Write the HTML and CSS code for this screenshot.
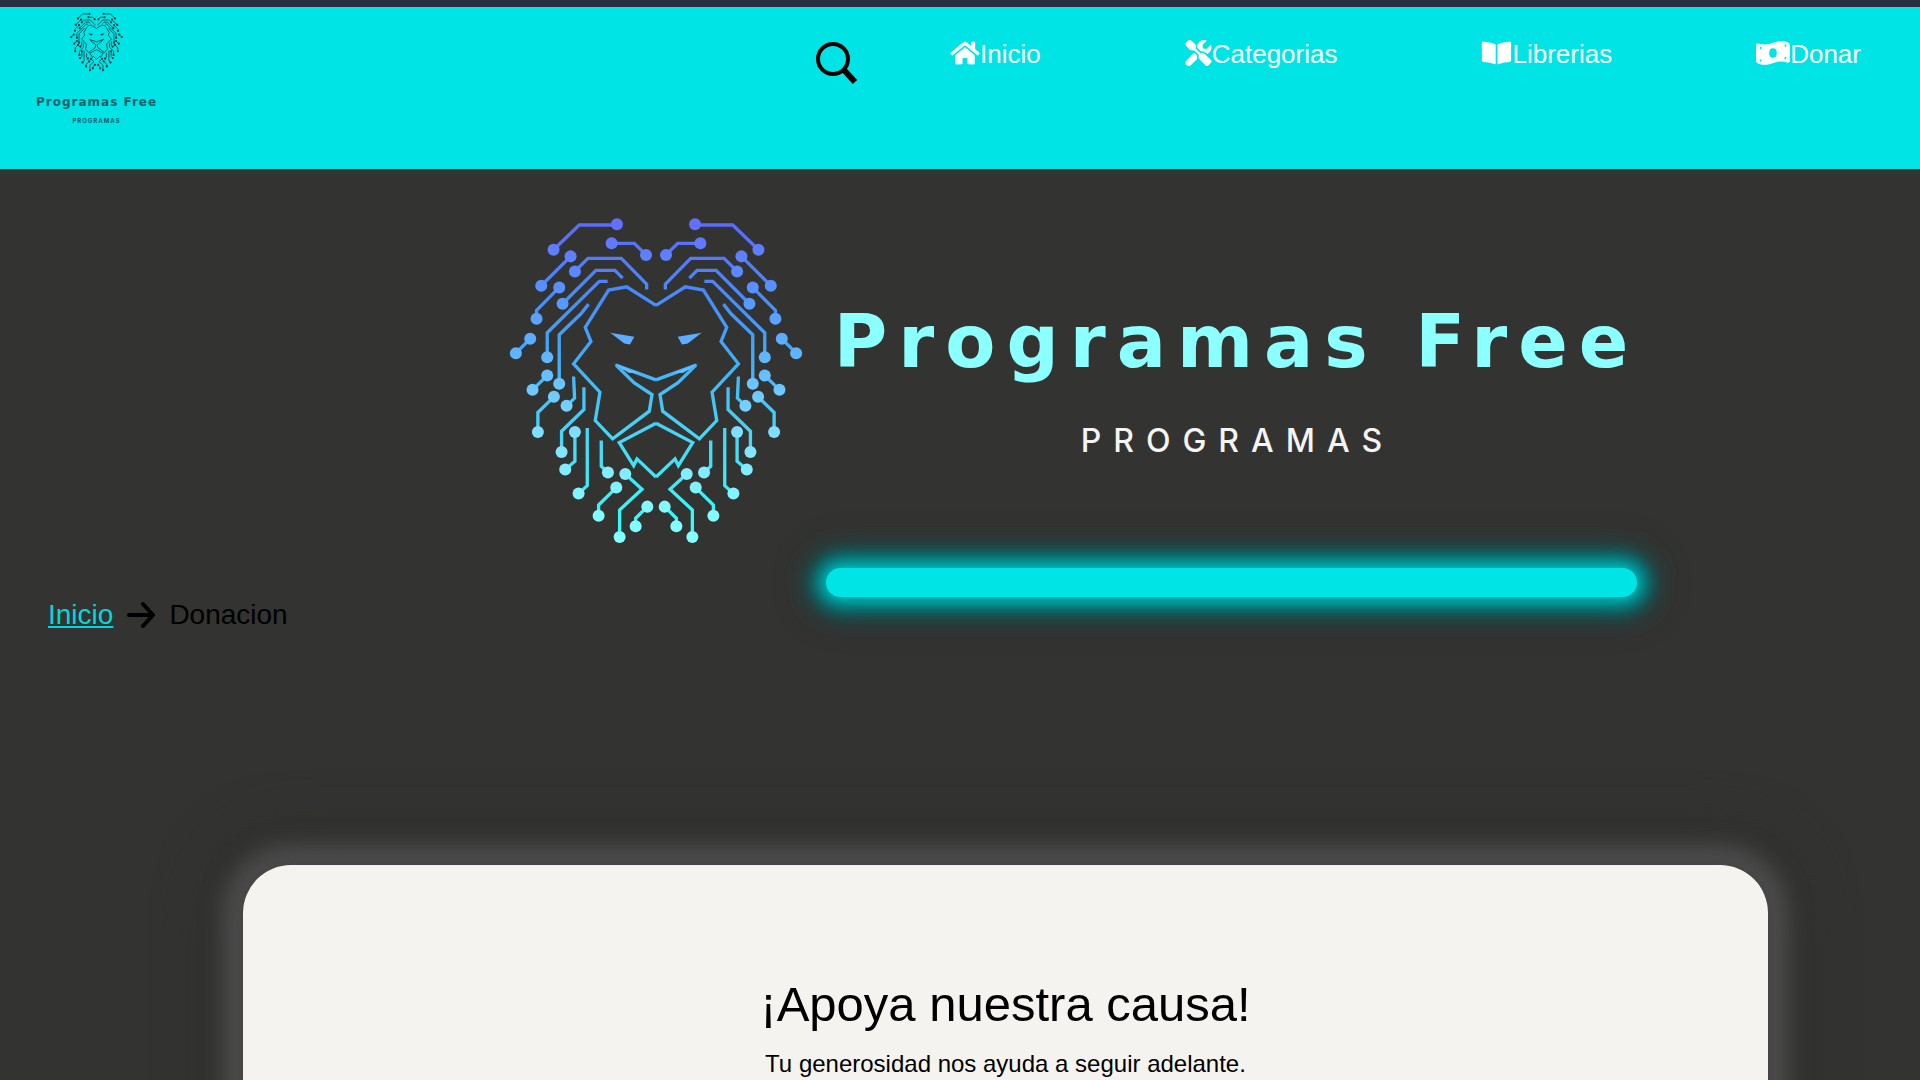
FILE: index.html
```html
<!DOCTYPE html>
<html lang="es">
<head>
<meta charset="utf-8">
<meta name="viewport" content="width=device-width, initial-scale=1">
<title>Programas Free - Donacion</title>
<link rel="stylesheet" href="styles.css">
</head>
<body>
<svg class="defs" aria-hidden="true">
  <defs>
    <linearGradient id="mane" gradientUnits="userSpaceOnUse" x1="0" y1="50" x2="0" y2="960">
      <stop offset="0" stop-color="#5c69fa"/>
      <stop offset=".25" stop-color="#478cfb"/>
      <stop offset=".45" stop-color="#41adf8"/>
      <stop offset=".7" stop-color="#48d6f5"/>
      <stop offset="1" stop-color="#38fafa"/>
    </linearGradient>
    <linearGradient id="nodes" gradientUnits="userSpaceOnUse" x1="0" y1="50" x2="0" y2="960">
      <stop offset="0" stop-color="#646eff"/>
      <stop offset=".25" stop-color="#5796ff"/>
      <stop offset=".45" stop-color="#60b7ff"/>
      <stop offset=".7" stop-color="#80e0ff"/>
      <stop offset="1" stop-color="#83ffff"/>
    </linearGradient>
    <g id="half">
      <g class="lines">
        <path d="M163 133L240 59H353M337 114H405L440 149M214 153L126 241M227 198L266 159H366L442 236V252M180 246L112 315V340M190 295L290 195H347L370 218M144 455V382L300 228H325M180 535V388L245 325L268 296M93 400L50 443"/>
        <path d="M470 300L382 244L328 254L258 366L275 408L223 475L302 560L288 645L340 700L450 617L458 567L405 532L350 479L470 523"/>
        <path d="M470 653L360 711L403 780L413 760L470 814M144 510L100 553M164 574L116 621V679M223 513L226 578L202 601M254 545V612L187 677V739M227 679V767L198 792M264 667V840L238 864M306 705V782L326 801M378 805L428 851L361 913V994M351 846L298 898V930M444 903L409 938V962"/>
      </g>
      <g class="dots">
        <path d="M333 382L405 394L392 417L375 414ZM342 473L420 503L388 502Z"/>
        <circle cx="353" cy="57" r="18"/><circle cx="163" cy="133" r="18"/><circle cx="337" cy="114" r="18"/><circle cx="440" cy="149" r="18"/>
        <circle cx="214" cy="153" r="18"/><circle cx="126" cy="241" r="18"/><circle cx="227" cy="198" r="18"/><circle cx="180" cy="246" r="18"/>
        <circle cx="112" cy="340" r="18"/><circle cx="190" cy="295" r="18"/><circle cx="144" cy="455" r="18"/><circle cx="180" cy="535" r="18"/>
        <circle cx="93" cy="400" r="18"/><circle cx="50" cy="443" r="18"/><circle cx="144" cy="510" r="18"/><circle cx="100" cy="553" r="18"/>
        <circle cx="164" cy="574" r="18"/><circle cx="116" cy="679" r="18"/><circle cx="202" cy="601" r="18"/><circle cx="187" cy="739" r="18"/>
        <circle cx="227" cy="679" r="18"/><circle cx="198" cy="792" r="18"/><circle cx="238" cy="864" r="18"/><circle cx="326" cy="801" r="18"/>
        <circle cx="378" cy="805" r="18"/><circle cx="361" cy="994" r="18"/><circle cx="351" cy="846" r="18"/><circle cx="298" cy="930" r="18"/>
        <circle cx="444" cy="903" r="18"/><circle cx="409" cy="962" r="18"/>
      </g>
    </g>
    <g id="lion"><use href="#half"/><use href="#half" transform="translate(940 0) scale(-1 1)"/></g>
  </defs>
</svg>

<header class="topbar">
  <a class="brand" href="#">
    <svg class="brand-lion" viewBox="30 35 880 980" aria-hidden="true"><use href="#lion"/></svg>
    <span class="brand-name">Programas Free</span>
    <span class="brand-sub">PROGRAMAS</span>
  </a>
  <button class="search" type="button" aria-label="Buscar">
    <svg viewBox="0 0 42 42" aria-hidden="true"><circle cx="17" cy="17" r="15"/><path d="M28 28L39 40"/></svg>
  </button>
  <nav class="menu">
    <a href="#"><svg class="icon-wide" viewBox="0 0 576 512" aria-hidden="true"><path d="M280.37 148.26L96 300.11V464a16 16 0 0 0 16 16l112.06-.29a16 16 0 0 0 15.92-16V368a16 16 0 0 1 16-16h64a16 16 0 0 1 16 16v95.64a16 16 0 0 0 16 16.05L464 480a16 16 0 0 0 16-16V300L295.67 148.26a12.19 12.19 0 0 0-15.3 0zM571.6 251.47L488 182.56V44.05a12 12 0 0 0-12-12h-56a12 12 0 0 0-12 12v72.61L318.47 43a48 48 0 0 0-61 0L4.34 251.47a12 12 0 0 0-1.6 16.9l25.5 31A12 12 0 0 0 45.15 301l235.22-193.74a12.19 12.19 0 0 1 15.3 0L530.9 301a12 12 0 0 0 16.9-1.6l25.5-31a12 12 0 0 0-1.7-16.93z"/></svg>Inicio</a>
    <a href="#"><svg class="icon-square" viewBox="0 0 512 512" aria-hidden="true"><path d="M501 396L384 279c-23-23-57-28-85-14L205 171c8-28 3-60-12-85L118 14C98-5 68-4 48 14L15 47c-19 19-19 49-2 70l72 75c25 17 56 20 84 12l96 95c-14 28-9 62 14 85l117 117c15 15 38 15 53 0l52-52c15-15 15-39 0-53zM332 225c28 0 55 11 75 31l19 19c16-7 31-16 44-29 37-37 50-89 38-137-2-9-14-12-20-5l-75 74-67-11-12-68 74-75c7-6 4-17-5-20-48-11-100 1-137 38-28 29-42 66-41 104l82 82c8-2 17-3 25-3zm-104 82l-57-57L19 403c-25 25-25 65 0 90s65 25 90 0l124-123c-8-20-10-42-5-63z"/></svg>Categorias</a>
    <a href="#"><svg class="icon-book" viewBox="0 0 576 512" aria-hidden="true"><path d="M542.22 32.05c-54.8 3.11-163.72 14.43-230.96 55.59-4.64 2.84-7.27 7.89-7.27 13.17v363.87c0 11.55 12.63 18.85 23.28 13.49 69.18-34.82 169.23-44.32 218.7-46.92 16.89-.89 30.02-14.43 30.02-30.66V62.75c.01-17.71-15.35-31.74-33.77-30.7zM264.73 87.64C197.5 46.48 88.58 35.17 33.78 32.05 15.36 31.01 0 45.04 0 62.75V400.6c0 16.24 13.13 29.78 30.02 30.66 49.49 2.6 149.59 12.11 218.77 46.95 10.62 5.35 23.21-1.94 23.21-13.46V100.63c0-5.29-2.62-10.14-7.27-12.99z"/></svg>Librerias</a>
    <a href="#"><svg class="icon-bill" viewBox="0 0 36 26" aria-hidden="true"><path fill-rule="evenodd" d="M0 5Q0 3 2 3C9 5 14 4 19 2C24 0 30 0 34 2Q36 3 36 5V21Q36 24 33 23C27 21 22 22 17 24C12 26 6 26 2 24Q0 23 0 21ZM18 8C15 8 14 10 14 13S15 18 18 18S22 16 22 13S21 8 18 8ZM4 6V9Q6 9 6 7ZM4 19V22L6 22Q6 20 4 19ZM32 4V7Q30 6 30 4ZM32 17V20L30 19Q30 17 32 17Z"/></svg>Donar</a>
  </nav>
</header>

<main>
  <section class="hero">
    <svg class="hero-lion" viewBox="30 35 880 980" aria-hidden="true"><use href="#lion"/></svg>
    <div class="hero-text">
      <h1>Programas Free</h1>
      <p>PROGRAMAS</p>
      <div class="glow"></div>
    </div>
  </section>

  <nav class="crumbs" aria-label="Ruta">
    <a href="#">Inicio</a>
    <svg viewBox="0 0 28 26" aria-hidden="true"><path d="M2 13H26M16 2L26 13L16 24"/></svg>
    <span>Donacion</span>
  </nav>

  <section class="card">
    <h2>¡Apoya nuestra causa!</h2>
    <p>Tu generosidad nos ayuda a seguir adelante.</p>
  </section>
</main>
</body>
</html>
```

FILE: styles.css
```css
* {
  box-sizing: border-box;
}

body {
  margin: 0;
  background: #333331;
  color: #000;
  font-family: "Liberation Sans", Arial, sans-serif;
}

h1, h2, p {
  margin: 0;
  font-weight: 400;
}

.defs {
  display: block;
  width: 0;
  height: 0;
}

.lines {
  fill: none;
  stroke: var(--line);
  stroke-width: var(--weight, 10);
  stroke-linejoin: miter;
}

.dots {
  fill: var(--dot);
}

/* Header */
.topbar {
  display: flex;
  align-items: flex-start;
  min-height: 169px;
  padding-right: 59px;
  border-top: 7px solid #282d40;
  background: #00e4e6;
}

.brand {
  --line: #045a60;
  --dot: #04363c;
  --weight: 16;
  display: flex;
  flex-direction: column;
  align-items: center;
  margin: 5px auto 0 36px;
  color: #14606a;
  text-decoration: none;
}

.brand-lion {
  width: 53px;
  height: 60px;
}

.brand-name {
  margin-top: 20px;
  font: 700 12px/20px "DejaVu Sans", sans-serif;
  letter-spacing: 1px;
}

.brand-sub {
  margin-top: 5px;
  font: 700 6px/8px Inter, sans-serif;
  letter-spacing: 1px;
}

.search {
  margin: 35px 92px 0 0;
  padding: 0;
  border: 0;
  background: none;
}

.search svg {
  display: block;
  width: 42px;
  height: 42px;
  fill: none;
  stroke: #000;
  stroke-width: 4;
}

.search path {
  stroke-width: 6;
}

.menu {
  display: flex;
  gap: 144px;
  padding-top: 31px;
}

.menu a {
  display: flex;
  color: #fff;
  font-size: 26px;
  line-height: 32px;
  text-decoration: none;
}

.menu svg {
  margin-top: 2px;
  height: 26px;
  fill: #fff;
}

.icon-wide {
  width: 30px;
}

.icon-square {
  width: 27px;
}

.icon-book {
  width: 31px;
}

.icon-bill {
  width: 34px;
}

/* Hero */
.hero {
  display: flex;
  gap: 23px;
  padding: 48px 283px 0 26.5%;
}

.hero-lion {
  --line: url(#mane);
  --dot: url(#nodes);
  flex: none;
  width: 294px;
  height: 327px;
}

.hero-text {
  flex: 1;
  min-width: 0;
  padding-top: 85px;
  text-align: center;
}

.hero h1 {
  color: #8cffff;
  font: 700 73px/80px "DejaVu Sans", sans-serif;
  letter-spacing: 11px;
  text-indent: 8px;
  white-space: nowrap;
}

.hero p {
  margin-top: 43px;
  color: #f4f4f4;
  font: 500 32px/32px Inter, sans-serif;
  letter-spacing: 12px;
  text-indent: 12px;
}

.glow {
  height: 29px;
  margin-top: 111px;
  border-radius: 15px;
  background: #00e4e6;
  box-shadow: 0 0 18px 6px #00c8cc, 0 0 22px 16px #006464, 0 0 40px 16px #00646440;
}

/* Breadcrumb */
.crumbs {
  display: flex;
  align-items: center;
  gap: 14px;
  padding: 2px 0 0 48px;
  font-size: 28px;
  line-height: 32px;
}

.crumbs a {
  color: #00d8dc;
}

.crumbs svg {
  width: 28px;
  height: 26px;
  fill: none;
  stroke: #000;
  stroke-width: 4;
  stroke-linecap: round;
  stroke-linejoin: round;
}

/* Donation card */
.card {
  margin: 234px 152px 0 243px;
  padding: 111px 48px;
  border-radius: 48px 48px 0 0;
  background: #f5f3ef;
  box-shadow: 0 0 10px 0 #404040, 0 0 22px 20px #4d4d4d, 0 0 50px 36px #30302e;
  text-align: center;
}

.card h2 {
  font-size: 49px;
  line-height: 56px;
}

.card p {
  margin-top: 16px;
  font-size: 24px;
  line-height: 32px;
}
```
